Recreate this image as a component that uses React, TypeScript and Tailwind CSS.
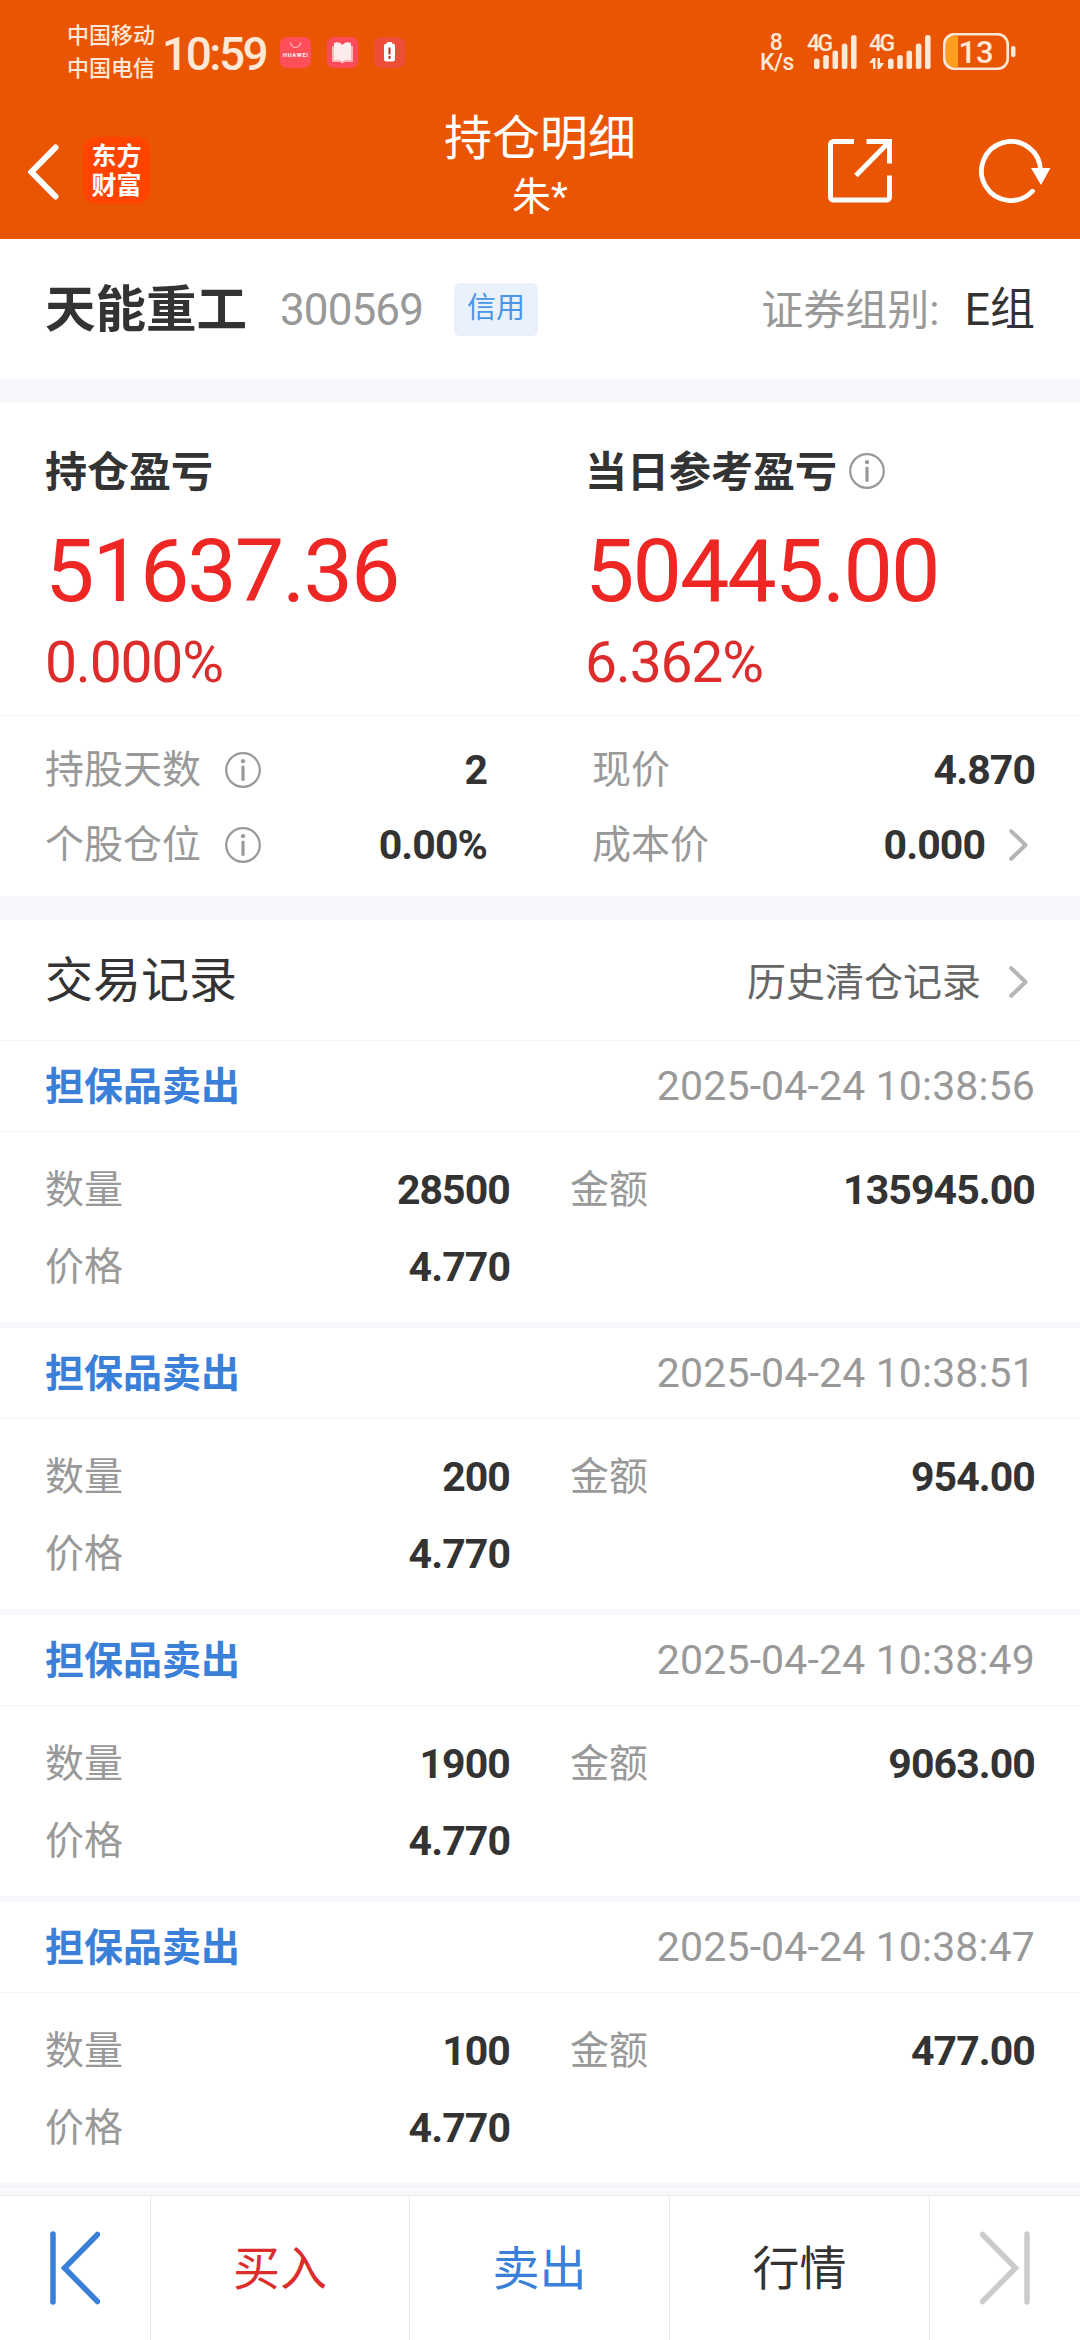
type TradeRecord = {
  time: string;
  quantity: string;
  price: string;
  amount: string;
};

const records: TradeRecord[] = [
  { time: "2025-04-24 10:38:56", quantity: "28500", price: "4.770", amount: "135945.00" },
  { time: "2025-04-24 10:38:51", quantity: "200", price: "4.770", amount: "954.00" },
  { time: "2025-04-24 10:38:49", quantity: "1900", price: "4.770", amount: "9063.00" },
  { time: "2025-04-24 10:38:47", quantity: "100", price: "4.770", amount: "477.00" },
];

function InfoIcon() {
  return (
    <svg className="w-9 h-9 -mt-0.5 text-[#999]" viewBox="0 0 36 36" fill="none" stroke="currentColor">
      <circle cx="18" cy="18" r="16.8" strokeWidth={2.2} />
      <circle cx="18" cy="9.2" r="2.1" fill="currentColor" stroke="none" />
      <path d="M18 15v12.5" strokeWidth={3.2} strokeLinecap="round" />
    </svg>
  );
}

function ChevronRight() {
  return (
    <svg className="w-[19px] h-8 -mt-0.5 text-[#b5b5b5]" viewBox="0 0 19 32" fill="none" stroke="currentColor">
      <path d="M2.2 2.2L16.5 16L2.2 29.8" strokeWidth={4} strokeLinecap="round" strokeLinejoin="round" />
    </svg>
  );
}

function SignalBars() {
  return (
    <svg className="w-[43px] h-[34px]" viewBox="0 0 43 34" fill="#ffe8d6">
      <rect x="0" y="23.5" width="5.6" height="10.5" rx="2.6" />
      <rect x="9.2" y="20" width="5.6" height="14" rx="2.6" />
      <rect x="18.5" y="15.5" width="5.6" height="18.5" rx="2.6" />
      <rect x="27.8" y="8.5" width="5.6" height="25.5" rx="2.6" />
      <rect x="37" y="0" width="5.6" height="34" rx="2.6" />
    </svg>
  );
}

function StatusBar() {
  return (
    <div className="h-[104px] flex items-start justify-between pl-[67px] pr-[64px] text-[#ffe8d6]">
      <div className="flex">
        <div className="pt-[19px] text-[22px] leading-[33px] font-medium">
          <div>中国移动</div>
          <div>中国电信</div>
        </div>
        <div className="w-[106px] ml-[7px] pt-[29px] text-[46px] leading-[50px] tracking-[-2.5px] font-medium whitespace-nowrap">
          10:59
        </div>
        <div className="flex gap-4 pt-[37px] ml-[12px]">
          <svg className="w-[31px] h-[31px]" viewBox="0 0 31 31">
            <rect width="31" height="31" rx="7" fill="#ff4f5b" />
            <path d="M10.5 5.5a5 5 0 0 0 10 0" fill="none" stroke="#ffd5d8" strokeWidth={1} />
            <text x="3" y="20" fontSize="5.6" fontWeight="700" fill="#fff" textLength="25">
              HUAWEI
            </text>
          </svg>
          <svg className="w-[31px] h-[31px]" viewBox="0 0 31 31">
            <rect width="31" height="31" rx="7" fill="#fd4b59" />
            <path d="M5 9h21v16h-8l-2.500 1.500L13 25H5z" fill="#ffb3b6" />
            <path d="M7 6q6-2 8.500 2q2.500-4 8.500-2v17q-6-1-8.500 1.500Q13 22 7 23z" fill="#ffeaec" />
          </svg>
          <svg className="w-[31px] h-[31px]" viewBox="0 0 31 31">
            <rect width="31" height="31" rx="7" fill="#ee4d37" />
            <rect x="13" y="5" width="5" height="2" fill="#fff" />
            <rect x="10" y="6.500" width="11" height="18" rx="2.500" fill="#fff" />
            <path d="M15.500 10.500v7M15.500 19v3" stroke="#b5301f" strokeWidth={2} />
          </svg>
        </div>
      </div>

      <div className="flex">
        <div className="w-8 mr-[15px] pt-[33px] text-center text-[23px] leading-[20px] font-medium tracking-[-0.5px]">
          <div>8</div>
          <div>K/s</div>
        </div>
        <div className="relative pl-[7px] pt-[35px]">
          <SignalBars />
          <span className="absolute left-0 top-[33px] text-[23px] leading-[22px] font-medium tracking-[-2.5px]">4G</span>
        </div>
        <div className="relative ml-3 pl-[19px] pt-[35px]">
          <SignalBars />
          <span className="absolute left-0 top-[33px] text-[23px] leading-[22px] font-medium tracking-[-2.5px]">4G</span>
          <svg className="absolute left-0 top-[58px] w-[15px] h-[11px]" viewBox="0 0 15 11" fill="#ffe8d6">
            <path d="M0 5L4 0h2.500v11H4V5zM15 5l-4 6H8.500V0H11v5z" />
          </svg>
        </div>
        <div className="ml-3 pt-[33px]">
          <svg className="w-[73px] h-[37px]" viewBox="0 0 73 37">
            <path d="M8 3h7v31H8Q3 34 3 28V9Q3 3 8 3z" fill="#ff9d1c" />
            <rect x="1.300" y="1.300" width="63.400" height="34.400" rx="10" fill="none" stroke="#ffe8d6" strokeWidth={2.600} />
            <rect x="68" y="13" width="4.500" height="11" rx="2" fill="#ffe8d6" />
            <text x="33" y="29.500" textAnchor="middle" fontSize="31" fontWeight="500" fill="#ffe8d6">
              13
            </text>
          </svg>
        </div>
      </div>
    </div>
  );
}

function TitleBar() {
  return (
    <div className="h-[135px] grid grid-cols-3 text-white">
      <div className="flex pl-7 pt-[33px]">
        <svg className="w-[31px] h-[56px] mt-[7px]" viewBox="0 0 31 56" fill="none" stroke="currentColor">
          <path d="M27.500 3.500L3.500 28l24 24.500" strokeWidth={6} strokeLinecap="round" />
        </svg>
        <div className="w-[67px] h-[67px] ml-6 pt-[5px] rounded-[14px] bg-[#ff4400] text-center text-[25px] leading-[29px] font-bold">
          <div>东方</div>
          <div>财富</div>
        </div>
      </div>
      <div className="text-center">
        <h1 className="pt-[5px] text-[48px] leading-[60px]">持仓明细</h1>
        <div className="text-[39px] leading-[56px]">朱*</div>
      </div>
      <div className="flex justify-end gap-[87px] pr-[29px] pt-[35px]">
        <svg className="w-[64px] h-[64px]" viewBox="0 0 64 64" fill="none" stroke="currentColor" strokeWidth={5}>
          <path d="M26 2.500H5.500a3 3 0 0 0-3 3v52.500a3 3 0 0 0 3 3h53a3 3 0 0 0 3-3V36.500" />
          <path d="M38.500 2.500h23v22M60.500 3.500L28 36.500" />
        </svg>
        <svg className="w-[72px] h-[66px]" viewBox="0 0 72 66" fill="none" stroke="currentColor">
          <path d="M61.500 32A29.500 29.500 0 1 0 53.500 52.200" strokeWidth={4.800} strokeLinecap="round" />
          <path d="M52 29h19.500L62 46z" fill="currentColor" stroke="none" />
        </svg>
      </div>
    </div>
  );
}

function StockHeader() {
  return (
    <section className="h-[140px] flex items-center px-[45px] bg-white">
      <h2 className="pt-0.5 text-[50.500px] leading-none font-bold">天能重工</h2>
      <span className="pt-0.5 ml-[33px] text-[44px] leading-none tracking-[-0.900px] text-[#999]">300569</span>
      <span className="ml-[31px] w-[84px] h-[53px] flex items-center justify-center rounded-md bg-[#e8f1fc] text-[29px] text-[#4a95e6]">
        信用
      </span>
      <span className="pt-0.5 ml-auto text-[42px] text-[#999]">证券组别:</span>
      <span className="pt-0.5 ml-[25px] text-[45px]">E组</span>
    </section>
  );
}

function ProfitSummary() {
  return (
    <section className="h-[493px] bg-white">
      <div className="h-[312px] grid grid-cols-[540px_1fr] pl-[45px] pt-[39px]">
        <div>
          <h3 className="h-[60px] flex items-center text-[42px] font-bold">持仓盈亏</h3>
          <div className="mt-[19px] text-[88px] leading-[100px] tracking-[-2px] text-[#ee2624]">51637.36</div>
          <div className="mt-3 text-[57px] leading-[60px] tracking-[-1.200px] text-[#dc2c2c]">0.000%</div>
        </div>
        <div>
          <h3 className="h-[60px] flex items-center text-[42px] font-bold">
            <span className="mr-3">当日参考盈亏</span>
            <InfoIcon />
          </h3>
          <div className="mt-[19px] text-[88px] leading-[100px] tracking-[-2px] text-[#ee2624]">50445.00</div>
          <div className="mt-3 text-[57px] leading-[60px] tracking-[-1.200px] text-[#dc2c2c]">6.362%</div>
        </div>
      </div>
      <div className="grid grid-cols-[442px_1fr] gap-x-[105px] pt-[17px] px-[45px] border-t border-[#f4f5f7] text-[39px] leading-[75px]">
        <div className="flex items-center">
          <span className="mr-6 text-[#999]">持股天数</span>
          <InfoIcon />
          <b className="ml-auto text-[41px] tracking-[-0.900px]">2</b>
        </div>
        <div className="flex items-center justify-between">
          <span className="text-[#999]">现价</span>
          <b className="text-[41px] tracking-[-0.900px]">4.870</b>
        </div>
        <div className="flex items-center">
          <span className="mr-6 text-[#999]">个股仓位</span>
          <InfoIcon />
          <b className="ml-auto text-[41px] tracking-[-0.900px]">0.00%</b>
        </div>
        <div className="flex items-center pr-[7px]">
          <span className="text-[#999]">成本价</span>
          <b className="ml-auto mr-6 text-[41px] tracking-[-0.900px]">0.000</b>
          <ChevronRight />
        </div>
      </div>
    </section>
  );
}

function RecordCard({ record }: { record: TradeRecord }) {
  return (
    <article className="h-[287px] bg-white border-b-[6px] border-[#f6f7fa]">
      <div className="h-[91px] flex items-center justify-between pt-0.5 px-[45px] border-b border-[#f4f5f7]">
        <span className="text-[39px] font-bold text-[#3a80d9]">担保品卖出</span>
        <time className="text-[41px] tracking-[0.150px] text-[#999]">{record.time}</time>
      </div>
      <div className="grid grid-cols-[465px_1fr] gap-x-[60px] px-[45px] pt-5 text-[39px] leading-[77px] text-[#999]">
        <div className="flex justify-between">
          <span>数量</span>
          <b className="text-[41px] tracking-[-0.900px] text-[#333]">{record.quantity}</b>
        </div>
        <div className="flex justify-between">
          <span>金额</span>
          <b className="text-[41px] tracking-[-0.900px] text-[#333]">{record.amount}</b>
        </div>
        <div className="flex justify-between">
          <span>价格</span>
          <b className="text-[41px] tracking-[-0.900px] text-[#333]">{record.price}</b>
        </div>
      </div>
    </article>
  );
}

function BottomBar() {
  return (
    <nav className="h-[145px] grid grid-cols-[151px_259px_260px_260px_150px] bg-white border-t border-[#e9eaec] text-[47px]">
      <button className="flex items-center justify-center border-r border-[#e9eaec] text-[#3a80d9]">
        <svg className="w-[50px] h-[74px]" viewBox="0 0 50 74" fill="none" stroke="currentColor" strokeWidth={5.500} strokeLinecap="round">
          <path d="M3 3v68M47.500 3.500L14.500 37l33 33.500" />
        </svg>
      </button>
      <button className="pt-0.5 border-r border-[#e9eaec] text-[#dc2c2c]">买入</button>
      <button className="pt-0.5 border-r border-[#e9eaec] text-[#3a80d9]">卖出</button>
      <button className="pt-0.5 border-r border-[#e9eaec]">行情</button>
      <button className="flex items-center justify-center text-[#ccc]">
        <svg className="w-[50px] h-[74px]" viewBox="0 0 50 74" fill="none" stroke="currentColor" strokeWidth={5.500} strokeLinecap="round">
          <path d="M47 3v68M2.500 3.500l33 33.500l-33 33.500" />
        </svg>
      </button>
    </nav>
  );
}

export default function App() {
  return (
    <div className="w-[1080px] h-[2340px] flex flex-col overflow-hidden bg-[#f6f7fa] text-[#333] font-[Roboto,'Noto_Sans_CJK_SC',sans-serif]">
      <header className="bg-[#ea5504]">
        <StatusBar />
        <TitleBar />
      </header>
      <main className="flex-1">
        <StockHeader />
        <div className="h-6" />
        <ProfitSummary />
        <div className="h-6" />
        <section>
          <div className="h-[121px] flex items-center justify-between pt-0.5 pl-[45px] pr-[52px] bg-white border-b border-[#f4f5f7]">
            <h3 className="text-[48px]">交易记录</h3>
            <div className="flex items-center gap-7 pt-1 text-[39px] text-[#666]">
              历史清仓记录
              <ChevronRight />
            </div>
          </div>
          {records.map((record) => (
            <RecordCard key={record.time} record={record} />
          ))}
        </section>
        <div className="h-px bg-white" />
      </main>
      <BottomBar />
    </div>
  );
}
